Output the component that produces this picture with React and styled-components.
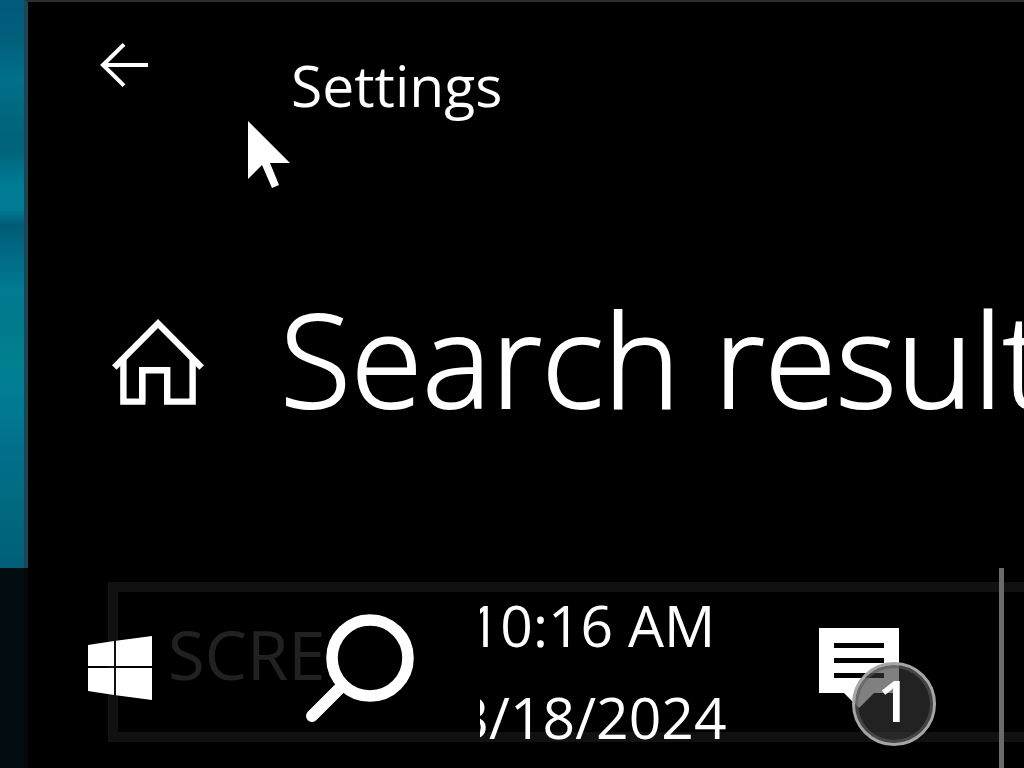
import React from 'react';
import styled, { createGlobalStyle } from 'styled-components';

const GlobalStyle = createGlobalStyle`
  * {
    box-sizing: border-box;
  }
  body {
    margin: 0;
    background: #000;
    color: #fff;
    font-family: "Open Sans", "Noto Sans", sans-serif;
    overflow: hidden;
  }
  button {
    display: flex;
    padding: 0;
    border: none;
    background: none;
    color: inherit;
    font-family: inherit;
  }
`;

const Desktop = styled.div`
  min-height: 100vh;
  padding-left: 24px;
  overflow: hidden;
  display: flex;
  background: linear-gradient(
    to bottom,
    #01587a 0,
    #01607c 40px,
    #006f88 80px,
    #006780 115px,
    #006379 150px,
    #007b96 185px,
    #007a95 210px,
    #015a75 225px,
    #01637f 240px,
    #017a93 290px,
    #007a8c 320px,
    #018090 365px,
    #007b95 400px,
    #016f8c 450px,
    #006a80 500px,
    #015f78 568px,
    #015f78 100%
  );
`;

const SettingsWindow = styled.main`
  flex: 1;
  min-width: 0;
  overflow: hidden;
  border-left: 4px solid #1b4654;
  border-top: 2px solid #2b2d2e;
  background: #000;
`;

const TitleBar = styled.header`
  display: flex;
  align-items: flex-start;
  height: 200px;
  padding: 41px 0 0 72px;
`;

const AppTitle = styled.div`
  margin-left: 143px;
  font-size: 57px;
  line-height: 84px;
`;

const PageHeader = styled.section`
  display: flex;
  align-items: center;
  height: 320px;
  padding-left: 84px;
`;

const PageTitle = styled.h1`
  margin: 0 0 0 76px;
  padding-bottom: 8px;
  font-size: 130px;
  font-weight: 300;
  line-height: 180px;
  white-space: nowrap;
  -webkit-text-stroke: 2px #fff;
`;

const SearchField = styled.div`
  display: flex;
  margin: 60px -40px 0 80px;
`;

const SearchInput = styled.input`
  flex: 1;
  min-width: 0;
  height: 160px;
  padding: 0 50px 16px;
  border: 10px solid #858585;
  border-radius: 0;
  outline: none;
  background: #000;
  color: #fff;
  font-family: inherit;
  font-size: 67px;
`;

const Taskbar = styled.nav`
  position: fixed;
  left: 0;
  right: 0;
  bottom: 0;
  display: flex;
  height: 200px;
  background: rgba(0, 0, 0, 0.87);
`;

const TaskButton = styled.button`
  flex: 0 0 240px;
  align-items: center;
  justify-content: center;
`;

const ClockButton = styled.button`
  && {
    flex: 1;
    min-width: 0;
    flex-direction: column;
    align-items: center;
    justify-content: center;
    padding: 5px 36px 0 0;
    overflow: hidden;
    font-size: 57px;
    line-height: 92px;
    white-space: nowrap;
  }
`;

const NotifyIcon = styled.span`
  position: relative;
  display: flex;
`;

const Badge = styled.span`
  position: absolute;
  left: 33px;
  top: 34px;
  display: flex;
  align-items: center;
  justify-content: center;
  width: 84px;
  height: 84px;
  padding-bottom: 8px;
  border: 3px solid #a6a6a6;
  border-radius: 50%;
  background: rgba(54, 54, 54, 0.63);
  box-shadow: inset 0 0 0 3px rgba(90, 90, 90, 0.6);
  font-size: 58px;
  font-weight: 600;
  line-height: 78px;
`;

const ShowDesktop = styled.button`
  flex: 0 0 25px;
  margin-left: 20px;
  && {
    border-left: 5px solid #6b6b6b;
  }
`;

const Pointer = styled.svg`
  position: fixed;
  left: 248px;
  top: 121px;
  pointer-events: none;
`;

function BackIcon() {
  return (
    <svg width="48" height="44" viewBox="0 0 48 44" fill="none" stroke="#fff" strokeWidth="4">
      <path d="M48 22H3M24 1.4L3 22L24 42.6" />
    </svg>
  );
}

function HomeIcon() {
  return (
    <svg width="92" height="88" viewBox="0 0 92 88" fill="none" stroke="#fff" strokeWidth="6.4">
      <path d="M2.3 49.5L46 5.6L89.7 49.5" />
      <path d="M11.4 41V83.6H30.2V52.3H55.2" />
      <path d="M80.6 41V83.6H55.2V49.1" />
      <path d="M30.2 52.3V83.6" />
    </svg>
  );
}

function WindowsIcon() {
  return (
    <svg width="64" height="64" viewBox="0 0 64 64" fill="#fff">
      <path d="M0 9L26 5V30H0ZM28 4.7L64 0V30H28ZM0 32H26V59L0 55ZM28 32H64V64L28 59.3Z" />
    </svg>
  );
}

function SearchIcon() {
  return (
    <svg width="108" height="108" viewBox="0 0 108 108" fill="none" stroke="#fff">
      <circle cx="64" cy="44" r="38" strokeWidth="11.6" />
      <path d="M37 71L6 102" strokeWidth="12" strokeLinecap="round" />
    </svg>
  );
}

function MessageIcon() {
  return (
    <svg width="80" height="80" viewBox="0 0 80 80">
      <path d="M0 0H80V65H55L40 80L25 65H0Z" fill="#fff" />
      <path d="M15 17.5H65M15 32.5H65M15 47.5H65" stroke="#000" strokeWidth="5" />
    </svg>
  );
}

function App() {
  return (
    <>
      <GlobalStyle />
      <Desktop>
        <SettingsWindow>
          <TitleBar>
            <button type="button" aria-label="Back"><BackIcon /></button>
            <AppTitle>Settings</AppTitle>
          </TitleBar>

          <PageHeader>
            <button type="button" aria-label="Home"><HomeIcon /></button>
            <PageTitle>Search results</PageTitle>
          </PageHeader>

          <SearchField>
            <SearchInput aria-label="Find a setting" defaultValue="SCRE" />
          </SearchField>
        </SettingsWindow>
      </Desktop>

      <Taskbar>
        <TaskButton type="button" aria-label="Start"><WindowsIcon /></TaskButton>
        <TaskButton type="button" aria-label="Search"><SearchIcon /></TaskButton>
        <ClockButton type="button">
          <span>10:16 AM</span>
          <span>3/18/2024</span>
        </ClockButton>
        <TaskButton type="button" aria-label="Notifications">
          <NotifyIcon>
            <MessageIcon />
            <Badge>1</Badge>
          </NotifyIcon>
        </TaskButton>
        <ShowDesktop type="button" aria-label="Show desktop" />
      </Taskbar>

      <Pointer width="44" height="68" viewBox="0 0 44 68" fill="#fff">
        <path d="M0 0L42 42H22L31 64L24 67L14 44L0 58Z" />
      </Pointer>
    </>
  );
}

export default App;
